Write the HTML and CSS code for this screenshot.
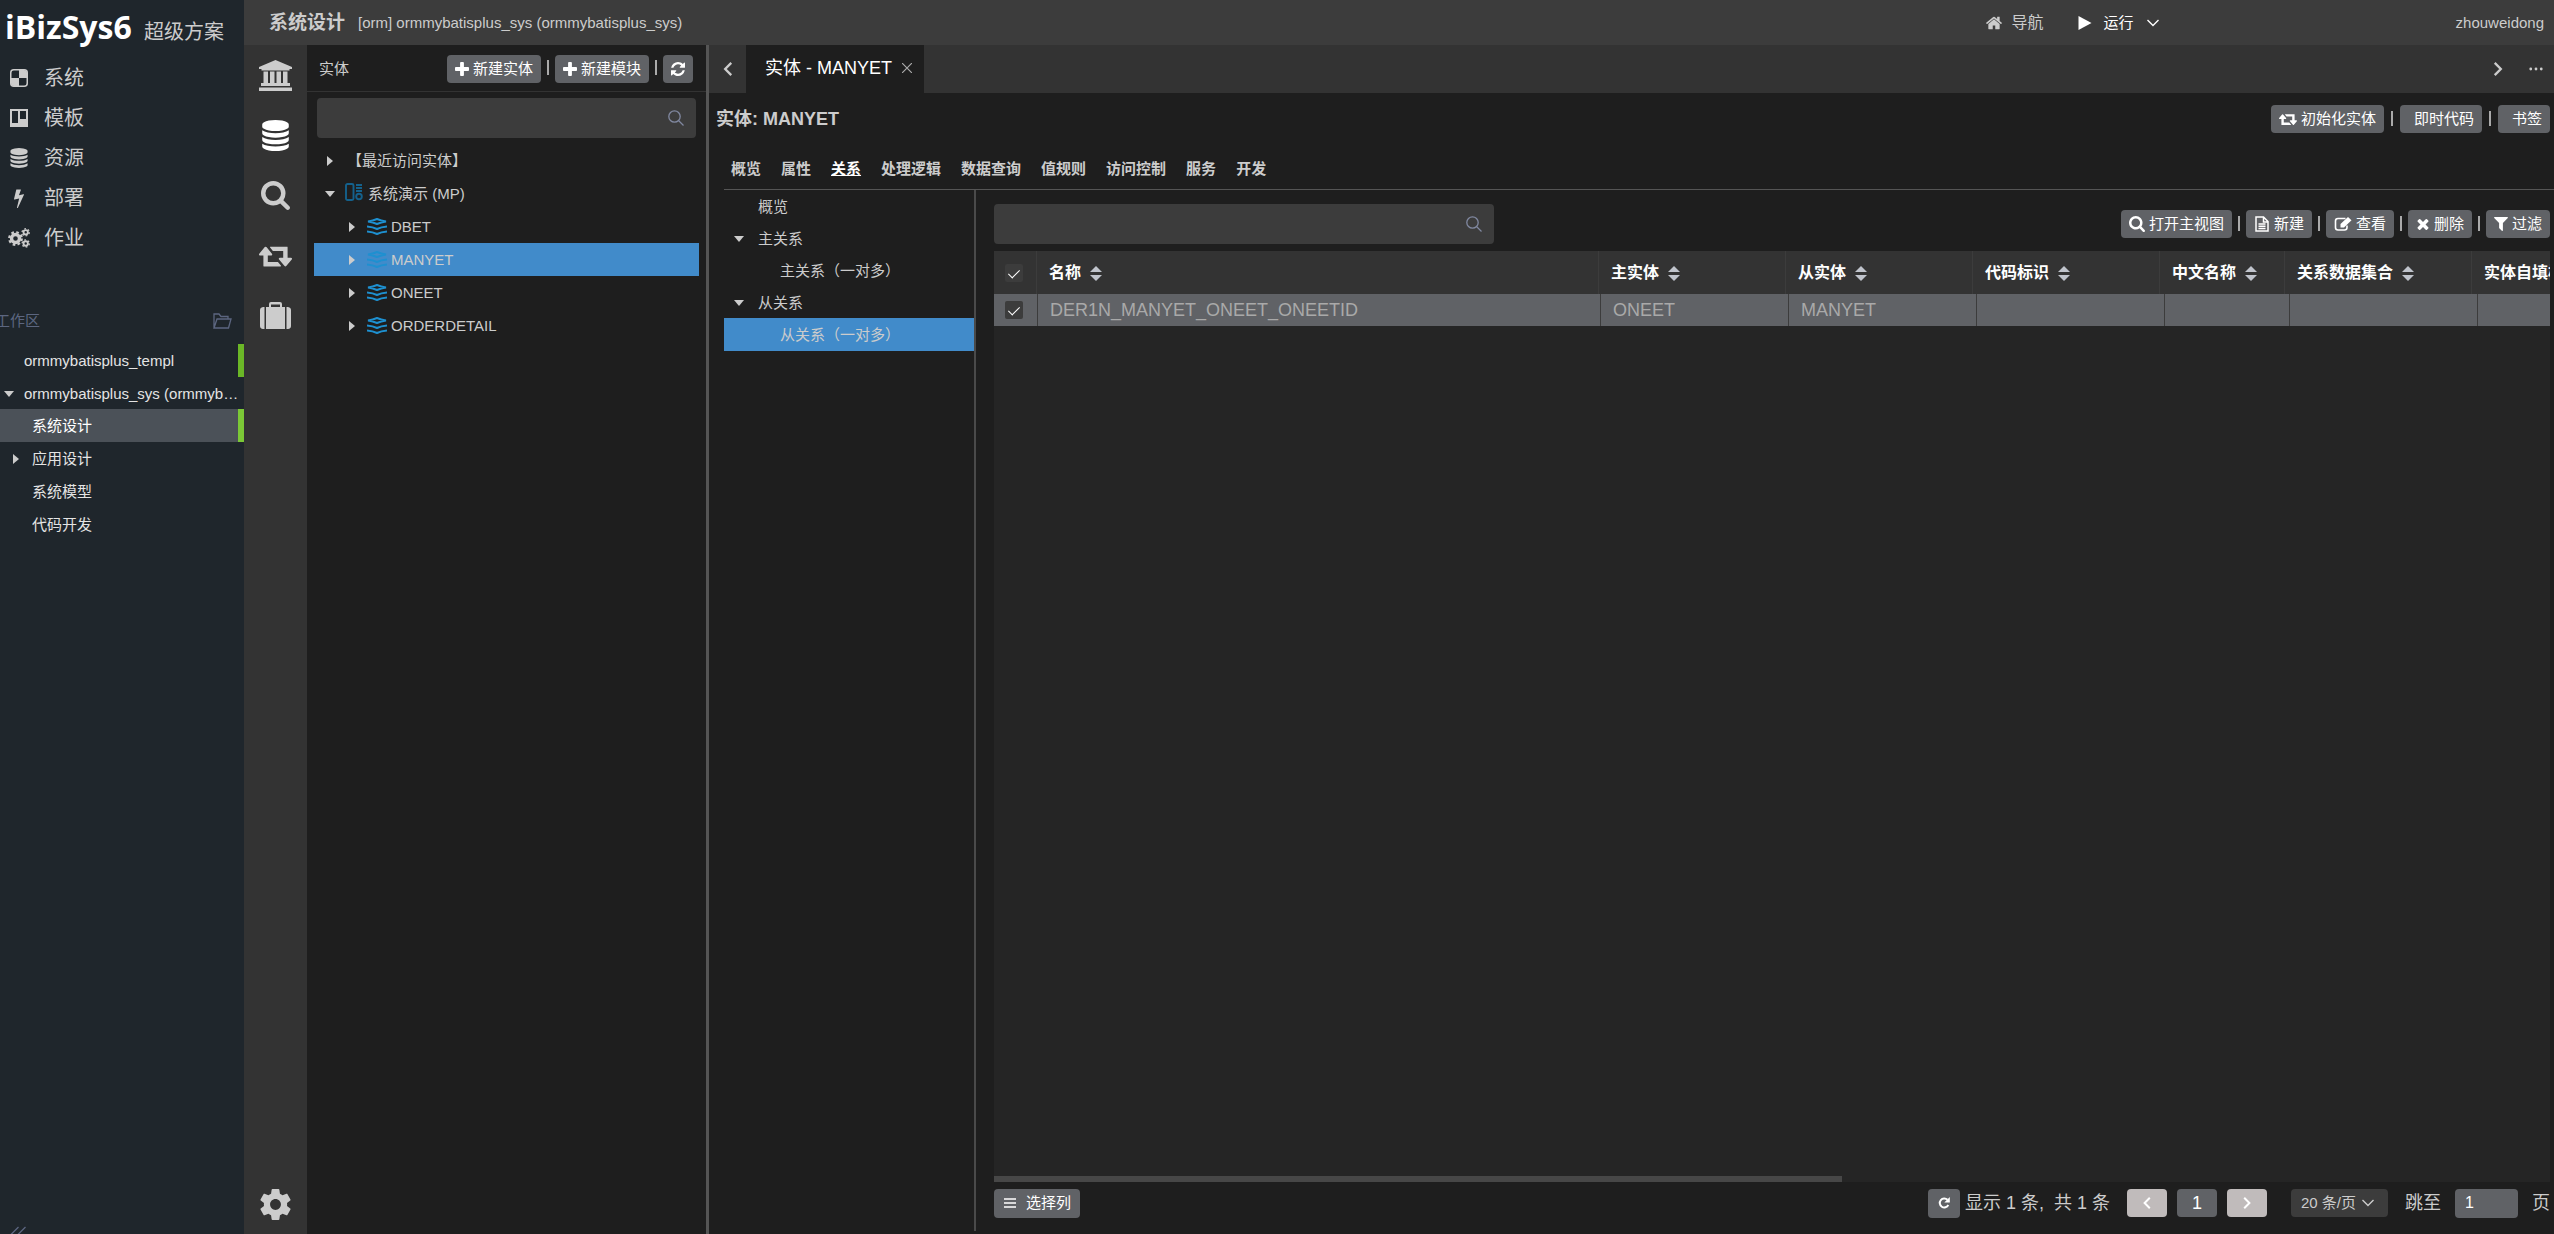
FILE: index.html
```html
<!DOCTYPE html>
<html lang="zh-CN">
<head>
  <meta charset="UTF-8">
  <meta name="viewport" content="width=device-width, initial-scale=1.0">
  <title>iBizSys6 - 系统设计</title>
  <link rel="stylesheet" href="styles.css">
</head>
<body>

<!-- icon sprite -->
<svg class="sprite" aria-hidden="true">
  <symbol id="i-plus" viewBox="192 128 1408 1408"><path d="M1600 736v192q0 40-28 68t-68 28h-416v416q0 40-28 68t-68 28h-192q-40 0-68-28t-28-68v-416h-416q-40 0-68-28t-28-68v-192q0-40 28-68t68-28h416v-416q0-40 28-68t68-28h192q40 0 68 28t28 68v416h416q40 0 68 28t28 68z"/></symbol>
  <symbol id="i-search" viewBox="64 128 1664 1664"><path d="M1216 832q0-185-131.5-316.5t-316.5-131.5-316.5 131.5-131.5 316.5 131.5 316.5 316.5 131.5 316.5-131.5 131.5-316.5zm512 832q0 52-38 90t-90 38q-54 0-90-38l-343-342q-179 124-399 124-143 0-273.5-55.5t-225-150-150-225-55.5-273.5 55.5-273.5 150-225 225-150 273.5-55.5 273.5 55.5 225 150 150 225 55.5 273.5q0 220-124 399l343 343q37 37 37 90z"/></symbol>
  <symbol id="i-database" viewBox="128 0 1536 1792"><path d="M896 768q237 0 443-43t325-127v170q0 69-103 128t-280 93.5-385 34.5-385-34.5-280-93.5-103-128v-170q119 84 325 127t443 43zm0 768q237 0 443-43t325-127v170q0 69-103 128t-280 93.5-385 34.5-385-34.5-280-93.5-103-128v-170q119 84 325 127t443 43zm0-384q237 0 443-43t325-127v170q0 69-103 128t-280 93.5-385 34.5-385-34.5-280-93.5-103-128v-170q119 84 325 127t443 43zm0-1152q208 0 385 34.5t280 93.5 103 128v128q0 69-103 128t-280 93.5-385 34.5-385-34.5-280-93.5-103-128v-128q0-69 103-128t280-93.5 385-34.5z"/></symbol>
  <symbol id="i-retweet" viewBox="0 256 1920 1280"><path d="M1280 1504q0 13-9.500 22.500t-22.500 9.500h-960q-8 0-13.500-2t-9-7-5.500-8-3-11.500-1-11.500v-600h-192q-26 0-45-19t-19-45q0-24 15-41l320-384q19-22 49-22t49 22l320 384q15 17 15 41 0 26-19 45t-45 19h-192v384h576q16 0 25 11l160 192q7 10 7 21zm640-416q0 24-15 41l-320 384q-20 23-49 23t-49-23l-320-384q-15-17-15-41 0-26 19-45t45-19h192v-384h-576q-16 0-25-12l-160-192q-7-9-7-20 0-13 9.500-22.500t22.500-9.500h960q8 0 13.500 2t9 7 5.500 8 3 11.500 1 11.500v600h192q26 0 45 19t19 45z"/></symbol>
  <symbol id="i-refresh" viewBox="128 128 1536 1536"><path d="M1639 1056q0 5-1 7-64 268-268 434.500t-478 166.500q-146 0-282.500-55t-243.500-157l-129 129q-19 19-45 19t-45-19-19-45v-448q0-26 19-45t45-19h448q26 0 45 19t19 45-19 45l-137 137q71 66 161 102t187 36q134 0 250-65t186-179q11-17 53-117 8-23 30-23h192q13 0 22.500 9.500t9.500 22.500zm25-800v448q0 26-19 45t-45 19h-448q-26 0-45-19t-19-45 19-45l138-138q-148-137-349-137-134 0-250 65t-186 179q-11 17-53 117-8 23-30 23h-199q-13 0-22.500-9.500t-9.500-22.500v-7q65-268 270-434.500t480-166.500q146 0 284 55.500t245 156.500l130-129q19-19 45-19t45 19 19 45z"/></symbol>
  <symbol id="i-times" viewBox="302 366 1188 1188"><path d="M1490 1322q0 40-28 68l-136 136q-28 28-68 28t-68-28l-294-294-294 294q-28 28-68 28t-68-28l-136-136q-28-28-28-68t28-68l294-294-294-294q-28-28-28-68t28-68l136-136q28-28 68-28t68 28l294 294 294-294q28-28 68-28t68 28l136 136q28 28 28 68t-28 68l-294 294 294 294q28 28 28 68z"/></symbol>
  <symbol id="i-filter" viewBox="190 256 1412 1408"><path d="M1595 295q17 41-14 70l-493 493v742q0 42-39 59-13 5-25 5-27 0-45-19l-256-256q-19-19-19-45v-486l-493-493q-31-29-14-70 17-39 59-39h1280q42 0 59 39z"/></symbol>
  <symbol id="i-home" viewBox="80 250 1632 1290"><path d="M1472 992v480q0 26-19 45t-45 19h-384v-384h-256v384h-384q-26 0-45-19t-19-45v-480q0-1 .5-3t.5-3l575-474 575 474q1 2 1 6zm223-69l-62 74q-8 9-21 11h-3q-13 0-21-7l-692-577-692 577q-12 8-24 7-13-2-21-11l-62-74q-8-10-7-23.500t11-21.500l719-599q32-26 76-26t76 26l244 204v-195q0-14 9-23t23-9h192q14 0 23 9t9 23v408l219 182q10 8 11 21.500t-7 23.500z"/></symbol>
  <symbol id="i-bolt" viewBox="446 0 900 1792"><path d="M1333 566q18 20 7 44l-540 1157q-13 25-42 25-4 0-14-2-17-5-25.500-19t-4.500-30l197-808-406 101q-4 1-12 1-18 0-31-11-18-15-13-39l201-825q4-14 16-23t28-9h328q19 0 32 12.500t13 29.500q0 8-5 18l-171 463 396-98q8-2 12-2 19 0 34 15z"/></symbol>
  <symbol id="i-bank" viewBox="0 0 33 31"><path d="M16.500 0L33 7v2h-2.500v1.500h-28V9H0V7zM4.500 11.500H9V23h2V11.500h4.500V23h2V11.500H22V23h2V11.500h4.500V23H31v3H2v-3h2.500zM0 27.500h33V31H0z"/></symbol>
  <symbol id="i-suitcase" viewBox="0 0 31 27"><path d="M3 5h1.500v22H3q-3-.5-3-3V8q0-2.500 3-3zM28 5h-1.500v22H28q3-.5 3-3V8q0-2.500-3-3zM6 5h3V2q0-2 2-2h9q2 0 2 2v3h3v22H6zM11 2.500V5h9V2.500z" fill-rule="evenodd"/></symbol>
  <symbol id="i-setting" viewBox="2 2 20 20"><path d="M19.430 12.980c.04-.32.07-.64.07-.98s-.03-.66-.07-.98l2.110-1.650c.19-.15.24-.42.12-.64l-2-3.460c-.12-.22-.39-.3-.61-.22l-2.490 1c-.52-.4-1.080-.73-1.690-.98l-.38-2.650C14.460 2.180 14.250 2 14 2h-4c-.25 0-.46.18-.49.42l-.38 2.650c-.61.25-1.170.59-1.690.98l-2.490-1c-.23-.09-.49 0-.61.22l-2 3.460c-.13.22-.07.49.12.64l2.110 1.650c-.04.32-.07.65-.07.98s.03.66.07.98l-2.110 1.650c-.19.15-.24.42-.12.64l2 3.460c.12.22.39.3.61.22l2.490-1c.52.4 1.080.73 1.690.98l.38 2.650c.03.24.24.42.49.42h4c.25 0 .46-.18.49-.42l.38-2.650c.61-.25 1.170-.59 1.690-.98l2.490 1c.23.09.49 0 .61-.22l2-3.460c.12-.22.07-.49-.12-.64l-2.110-1.650zM12 15.500c-1.930 0-3.500-1.570-3.500-3.500s1.570-3.500 3.500-3.500 3.500 1.570 3.500 3.500-1.570 3.500-3.500 3.500z"/></symbol>
  <symbol id="i-checker" viewBox="-1 -1 20 20"><rect x=".75" y=".75" width="16.500" height="16.500" rx="3" fill="none" stroke="currentColor" stroke-width="1.500"/><path d="M9 1h5q3 0 3 3v5H9zM1 9h8v8H4q-3 0-3-3z"/></symbol>
  <symbol id="i-board" viewBox="-1 -1 20 20"><path fill-rule="evenodd" d="M0 0h18v18H0zM2 2v12h6V2zM10 2v8h6V2z"/></symbol>
  <symbol id="i-cogs" viewBox="0 0 22 20">
    <g fill="none" stroke="currentColor"><circle cx="7.500" cy="10.500" r="4" stroke-width="3.400"/><circle cx="7.500" cy="10.500" r="6.300" stroke-width="2.200" stroke-dasharray="2.600 2.348"/><circle cx="17.700" cy="4.300" r="2.200" stroke-width="1.900"/><circle cx="17.700" cy="4.300" r="3.600" stroke-width="1.300" stroke-dasharray="1.700 2.070"/><circle cx="17.700" cy="15.500" r="2.200" stroke-width="1.900"/><circle cx="17.700" cy="15.500" r="3.600" stroke-width="1.300" stroke-dasharray="1.700 2.070"/></g>
  </symbol>
  <symbol id="i-folder" viewBox="0 0 19 16"><path fill="none" stroke="currentColor" stroke-width="1.300" d="M1 15V1h5l2 2.500h7V6M1 15L4 6h14l-2.500 9z"/></symbol>
  <symbol id="i-collapse" viewBox="0 0 16 16"><path fill="none" stroke="currentColor" stroke-width="1.300" d="M8.500 1L1 8.500 8.500 16M15.500 1L8 8.500l7.500 7.500"/></symbol>
  <symbol id="i-lens" viewBox="0 0 16 16"><g fill="none" stroke="currentColor" stroke-width="1.300"><circle cx="6.500" cy="6.500" r="5.700"/><path d="M10.500 10.500l5 5"/></g></symbol>
  <symbol id="i-module" viewBox="0 0 18 18"><g fill="none" stroke="currentColor" stroke-width="1.900"><rect x="1" y="1" width="7.500" height="16" rx="1.500"/><path d="M11 2h6M11 5h6M11 8h6"/><circle cx="14" cy="13.500" r="2.800"/></g></symbol>
  <symbol id="i-layers" viewBox="0 0 20 17"><path fill="none" stroke="currentColor" stroke-width="2" d="M1 3.500Q6 2.800 10 1q4 1.800 9 2.500-5 .7-9 2.500-4-1.800-9-2.500zM0 8.500q6 .5 10 2.500 4-2 10-2.500M0 13.500q6 .5 10 2.500 4-2 10-2.500"/></symbol>
  <symbol id="i-left" viewBox="0 0 10 15"><path fill="none" stroke="currentColor" stroke-width="2.500" d="M8.500 1L2 7.500 8.500 14"/></symbol>
  <symbol id="i-right" viewBox="0 0 10 15"><path fill="none" stroke="currentColor" stroke-width="2.500" d="M1.500 1L8 7.500 1.500 14"/></symbol>
  <symbol id="i-down" viewBox="0 0 12 8"><path fill="none" stroke="currentColor" stroke-width="1.400" d="M.5 1L6 6.500 11.500 1"/></symbol>
  <symbol id="i-close" viewBox="0 0 10 10"><path fill="none" stroke="currentColor" stroke-width="1.200" d="M0 0l10 10M10 0L0 10"/></symbol>
  <symbol id="i-more" viewBox="0 0 16 4"><circle cx="2" cy="2" r="1.600"/><circle cx="8" cy="2" r="1.600"/><circle cx="14" cy="2" r="1.600"/></symbol>
  <symbol id="i-play" viewBox="0 0 13 14"><path d="M0 0l13 7-13 7z"/></symbol>
  <symbol id="i-file" viewBox="0 0 14 16"><path fill="none" stroke="currentColor" stroke-width="1.500" d="M1 1h7.500L13 5.500V15H1zM8.500 1v5H13M3.500 8h7M3.500 10.300h7M3.500 12.600h7"/></symbol>
  <symbol id="i-edit" viewBox="0 0 17 14"><path fill="none" stroke="currentColor" stroke-width="1.600" d="M11 1.500H3.500Q1 1.500 1 4v6.500Q1 13 3.500 13H10q2.500 0 2.500-2.500V8.500"/><path d="M13.500 0L17 3.200 9.500 10.500H6V7z"/></symbol>
  <symbol id="i-redo" viewBox="0 0 12 12"><path fill="none" stroke="currentColor" stroke-width="2" d="M9.500 2.800A4.500 4.500 0 1 0 10.300 8"/><path d="M11.800 0v5.500H6.300z"/></symbol>
  <symbol id="i-menu" viewBox="0 0 12 10"><path fill="none" stroke="currentColor" stroke-width="1.400" d="M0 1h12M0 5h12M0 9h12"/></symbol>
</svg>

<aside class="sidebar">
  <div class="logo"><span class="logo-name">iBizSys6</span><span class="logo-sub">超级方案</span></div>
  <nav class="main-menu">
    <a href="#"><svg class="icon"><use href="#i-checker"/></svg>系统</a>
    <a href="#"><svg class="icon"><use href="#i-board"/></svg>模板</a>
    <a href="#"><svg class="icon"><use href="#i-database"/></svg>资源</a>
    <a href="#"><svg class="icon"><use href="#i-bolt"/></svg>部署</a>
    <a href="#"><svg class="icon"><use href="#i-cogs"/></svg>作业</a>
  </nav>
  <div class="workspace-title">
    <span>工作区</span>
    <button class="icon-btn" aria-label="打开"><svg class="icon"><use href="#i-folder"/></svg></button>
  </div>
  <ul class="workspace">
    <li class="marked"><span class="arrow"></span><span class="label">ormmybatisplus_templ</span></li>
    <li><span class="arrow open"></span><span class="label">ormmybatisplus_sys (ormmybatisplus_sys)</span></li>
    <li class="sub marked active"><span class="arrow"></span><span class="label">系统设计</span></li>
    <li class="sub"><span class="arrow closed"></span><span class="label">应用设计</span></li>
    <li class="sub"><span class="arrow"></span><span class="label">系统模型</span></li>
    <li class="sub"><span class="arrow"></span><span class="label">代码开发</span></li>
  </ul>
  <button class="icon-btn collapse" aria-label="收起"><svg class="icon"><use href="#i-collapse"/></svg></button>
</aside>

<div class="page">
  <header class="header">
    <h1>系统设计</h1>
    <span class="system-name">[orm] ormmybatisplus_sys (ormmybatisplus_sys)</span>
    <div class="header-menu">
      <a href="#" class="guide"><svg class="icon"><use href="#i-home"/></svg>导航</a>
      <button class="run"><svg class="icon"><use href="#i-play"/></svg>运行<svg class="icon down"><use href="#i-down"/></svg></button>
    </div>
    <span class="user">zhouweidong</span>
  </header>

  <div class="body">
    <nav class="icon-bar">
      <button aria-label="系统"><svg class="icon"><use href="#i-bank"/></svg></button>
      <button class="active" aria-label="实体"><svg class="icon"><use href="#i-database"/></svg></button>
      <button aria-label="搜索"><svg class="icon lens"><use href="#i-search"/></svg></button>
      <button aria-label="同步"><svg class="icon"><use href="#i-retweet"/></svg></button>
      <button aria-label="工具"><svg class="icon case"><use href="#i-suitcase"/></svg></button>
      <button class="setting" aria-label="设置"><svg class="icon case"><use href="#i-setting"/></svg></button>
    </nav>

    <section class="entity-panel">
      <div class="panel-head">
        <span>实体</span>
        <div class="toolbar">
          <button class="btn"><svg class="icon"><use href="#i-plus"/></svg>新建实体</button>
          <span class="sep"></span>
          <button class="btn"><svg class="icon"><use href="#i-plus"/></svg>新建模块</button>
          <span class="sep"></span>
          <button class="btn" aria-label="刷新"><svg class="icon"><use href="#i-refresh"/></svg></button>
        </div>
      </div>
      <div class="search">
        <input type="text" aria-label="搜索实体">
        <svg class="icon"><use href="#i-lens"/></svg>
      </div>
      <ul class="tree">
        <li><span class="arrow closed"></span><span class="recent">【最近访问实体】</span></li>
        <li><span class="arrow open"></span><svg class="icon module"><use href="#i-module"/></svg>系统演示 (MP)</li>
        <li class="sub"><span class="arrow closed"></span><svg class="icon layers"><use href="#i-layers"/></svg>DBET</li>
        <li class="sub active"><span class="arrow closed"></span><svg class="icon layers"><use href="#i-layers"/></svg>MANYET</li>
        <li class="sub"><span class="arrow closed"></span><svg class="icon layers"><use href="#i-layers"/></svg>ONEET</li>
        <li class="sub"><span class="arrow closed"></span><svg class="icon layers"><use href="#i-layers"/></svg>ORDERDETAIL</li>
      </ul>
    </section>

    <main class="main">
      <div class="tabs">
        <button class="icon-btn prev" aria-label="上一个"><svg class="icon"><use href="#i-left"/></svg></button>
        <div class="tab">实体 - MANYET<button class="icon-btn" aria-label="关闭"><svg class="icon"><use href="#i-close"/></svg></button></div>
        <button class="icon-btn next" aria-label="下一个"><svg class="icon"><use href="#i-right"/></svg></button>
        <button class="icon-btn more" aria-label="更多"><svg class="icon"><use href="#i-more"/></svg></button>
      </div>

      <div class="title-row">
        <h2>实体: MANYET</h2>
        <div class="toolbar">
          <button class="btn"><svg class="icon wide"><use href="#i-retweet"/></svg>初始化实体</button>
          <span class="sep"></span>
          <button class="btn no-icon">即时代码</button>
          <span class="sep"></span>
          <button class="btn no-icon">书签</button>
        </div>
      </div>

      <nav class="sub-nav">
        <a href="#">概览</a>
        <a href="#">属性</a>
        <a href="#" class="active">关系</a>
        <a href="#">处理逻辑</a>
        <a href="#">数据查询</a>
        <a href="#">值规则</a>
        <a href="#">访问控制</a>
        <a href="#">服务</a>
        <a href="#">开发</a>
      </nav>

      <div class="content">
        <ul class="relation-tree">
          <li><span class="arrow"></span>概览</li>
          <li><span class="arrow open"></span>主关系</li>
          <li class="sub"><span class="arrow"></span>主关系（一对多）</li>
          <li><span class="arrow open"></span>从关系</li>
          <li class="sub active"><span class="arrow"></span>从关系（一对多）</li>
        </ul>

        <section class="grid">
          <div class="grid-bar">
            <div class="search">
              <input type="text" aria-label="搜索关系">
              <svg class="icon"><use href="#i-lens"/></svg>
            </div>
            <div class="toolbar">
              <button class="btn"><svg class="icon medium"><use href="#i-search"/></svg>打开主视图</button>
              <span class="sep"></span>
              <button class="btn"><svg class="icon medium"><use href="#i-file"/></svg>新建</button>
              <span class="sep"></span>
              <button class="btn"><svg class="icon wide"><use href="#i-edit"/></svg>查看</button>
              <span class="sep"></span>
              <button class="btn"><svg class="icon small"><use href="#i-times"/></svg>删除</button>
              <span class="sep"></span>
              <button class="btn"><svg class="icon"><use href="#i-filter"/></svg>过滤</button>
            </div>
          </div>

          <div class="table-wrap">
            <table class="table-head">
              <colgroup><col class="c-check"><col class="c-name"><col class="c-mid"><col class="c-mid"><col class="c-mid"><col class="c-short"><col class="c-mid"><col class="c-mid"></colgroup>
              <thead>
                <tr>
                  <th><input type="checkbox" checked aria-label="全选"></th>
                  <th>名称<span class="sort"></span></th>
                  <th>主实体<span class="sort"></span></th>
                  <th>从实体<span class="sort"></span></th>
                  <th>代码标识<span class="sort"></span></th>
                  <th>中文名称<span class="sort"></span></th>
                  <th>关系数据集合<span class="sort"></span></th>
                  <th>实体自填模式<span class="sort"></span></th>
                </tr>
              </thead>
            </table>
            <table class="table-body">
              <colgroup><col class="c-check"><col class="c-name"><col class="c-mid"><col class="c-mid"><col class="c-mid"><col class="c-short"><col class="c-mid"><col class="c-mid"></colgroup>
              <tbody>
                <tr>
                  <td><input type="checkbox" checked aria-label="选择行"></td>
                  <td>DER1N_MANYET_ONEET_ONEETID</td>
                  <td>ONEET</td>
                  <td>MANYET</td>
                  <td></td>
                  <td></td>
                  <td></td>
                  <td></td>
                </tr>
              </tbody>
            </table>
            <div class="scrollbar"></div>
          </div>

          <div class="grid-foot">
            <button class="btn columns"><svg class="icon"><use href="#i-menu"/></svg>选择列</button>
            <div class="pager">
              <button class="btn reload" aria-label="刷新"><svg class="icon"><use href="#i-redo"/></svg></button>
              <span class="total">显示 1 条,&nbsp; 共 1 条</span>
              <div class="pages">
                <button class="page-btn disabled" aria-label="上一页"><svg class="icon"><use href="#i-left"/></svg></button>
                <button class="page-btn">1</button>
                <button class="page-btn disabled" aria-label="下一页"><svg class="icon"><use href="#i-right"/></svg></button>
              </div>
              <div class="page-size">
                <select aria-label="每页条数"><option>20 条/页</option></select>
                <svg class="icon"><use href="#i-down"/></svg>
              </div>
              <label for="jump">跳至</label>
              <input type="text" id="jump" value="1">
              <span>页</span>
            </div>
          </div>
        </section>
      </div>
    </main>
  </div>
</div>

</body>
</html>
```

FILE: styles.css
```css
* {
  box-sizing: border-box;
  margin: 0;
  padding: 0;
}

body {
  display: flex;
  height: 100vh;
  overflow: hidden;
  background: #1e1e1e;
  color: #ccc;
  font-family: "Liberation Sans", "Noto Sans CJK SC", sans-serif;
  font-size: 15px;
  line-height: 20px;
}

button,
input,
select {
  font: inherit;
  color: inherit;
  border: none;
  outline: none;
}

button {
  background: none;
  cursor: pointer;
}

a {
  color: inherit;
  text-decoration: none;
}

ul {
  list-style: none;
}

.sprite {
  position: absolute;
  width: 0;
  height: 0;
}

.icon {
  display: block;
  flex: none;
  width: 14px;
  height: 14px;
  fill: currentColor;
}

.icon-btn {
  display: flex;
  align-items: center;
  justify-content: center;
}

/* tree arrows */
.arrow {
  flex: none;
  width: 10px;
  display: flex;
  justify-content: center;
}

.arrow.open::before {
  content: "";
  border: 5px solid transparent;
  border-top: 6px solid #ccc;
  border-bottom: none;
}

.arrow.closed::before {
  content: "";
  border: 5px solid transparent;
  border-left: 6px solid #ccc;
  border-right: none;
}

/* left sidebar */
.sidebar {
  flex: none;
  display: flex;
  flex-direction: column;
  width: 244px;
  overflow: hidden;
  background: #1f262c;
}

.logo {
  display: flex;
  align-items: baseline;
  justify-content: space-between;
  height: 58px;
  padding: 4px 20px 0 5px;
  line-height: 46px;
  white-space: nowrap;
}

.logo-name {
  font-family: "Open Sans", sans-serif;
  font-size: 32px;
  font-weight: bold;
  color: #fff;
}

.logo-sub {
  font-size: 20px;
}

.main-menu a {
  display: flex;
  align-items: center;
  gap: 14px;
  height: 40px;
  padding-left: 8px;
  font-size: 20px;
}

.main-menu .icon {
  width: 22px;
  height: 20px;
}

.workspace-title {
  display: flex;
  align-items: center;
  justify-content: space-between;
  height: 86px;
  padding: 40px 12px 0 0;
  color: #5c6680;
}

.workspace-title span {
  margin-left: -5px;
}

.workspace-title .icon {
  width: 19px;
  height: 16px;
}

.workspace li {
  display: flex;
  align-items: center;
  gap: 10px;
  height: 33px;
  padding-left: 4px;
  color: #e4e4e4;
}

.workspace .sub {
  gap: 5px;
  padding-left: 17px;
}

.workspace .sub .arrow {
  justify-content: flex-start;
  margin-left: -4px;
  width: 14px;
}

.workspace .label {
  overflow: hidden;
  text-overflow: ellipsis;
  white-space: nowrap;
}

.workspace .marked {
  border-right: 6px solid #6bb727;
}

.workspace .active {
  margin-top: -1px;
  background: #4b5158;
  border-right-color: #7bc836;
  color: #fff;
}

.collapse {
  margin: auto 0 -8px 10px;
  width: 16px;
  color: #5c6680;
}

.collapse .icon {
  width: 16px;
  height: 16px;
}

/* header */
.page {
  flex: 1;
  display: flex;
  flex-direction: column;
  min-width: 0;
}

.header {
  flex: none;
  display: flex;
  align-items: center;
  height: 45px;
  padding: 0 10px 0 25px;
  background: #3c3c3c;
}

.header h1 {
  margin-right: 13px;
  font-size: 19px;
}

.header-menu {
  display: flex;
  align-items: center;
  gap: 34px;
  margin-left: auto;
  margin-right: 296px;
}

.guide,
.run {
  display: flex;
  align-items: center;
  gap: 10px;
}

.guide {
  font-size: 16px;
}

.guide .icon {
  width: 16px;
}

.run {
  gap: 12px;
  color: #fff;
}

.run .down {
  height: 8px;
}

.body {
  flex: 1;
  display: flex;
  min-height: 0;
}

.icon-bar {
  flex: none;
  display: flex;
  flex-direction: column;
  width: 63px;
  background: #333;
}

.icon-bar button {
  display: flex;
  align-items: center;
  justify-content: center;
  height: 60px;
}

.icon-bar .icon {
  width: 33px;
  height: 31px;
}

.icon-bar .lens {
  width: 29px;
  height: 29px;
}

.icon-bar .case {
  width: 31px;
}

.icon-bar .active {
  color: #fff;
}

.icon-bar .setting {
  margin-top: auto;
}

/* buttons */
.toolbar {
  display: flex;
  align-items: center;
  gap: 6px;
}

.btn {
  display: flex;
  align-items: center;
  gap: 4px;
  height: 28px;
  padding: 0 8px;
  border-radius: 4px;
  background: #606266;
  color: #fff;
  white-space: nowrap;
}

.btn .medium {
  width: 16px;
  height: 16px;
}

.btn .wide {
  width: 18px;
}

.btn .small {
  height: 11px;
}

.btn.no-icon {
  padding-left: 14px;
}

.sep {
  width: 2px;
  height: 15px;
  margin-bottom: 2px;
  background: #aaa;
}

.search {
  position: relative;
}

.search input {
  display: block;
  width: 100%;
  height: 40px;
  padding: 0 40px 0 12px;
  border-radius: 4px;
  background: #3c3c3c;
}

.search .icon {
  position: absolute;
  top: 12px;
  right: 12px;
  width: 16px;
  height: 16px;
  color: #8088a0;
}

/* entity tree */
.entity-panel {
  flex: none;
  width: 402px;
  border-right: 3px solid #555;
}

.panel-head {
  display: flex;
  align-items: center;
  justify-content: space-between;
  height: 47px;
  padding: 1px 13px 0 12px;
  border-bottom: 1px solid #333;
}

.entity-panel .search {
  margin: 6px 10px;
}

.tree {
  padding: 0 7px;
}

.tree li {
  display: flex;
  align-items: center;
  height: 33px;
  padding-left: 11px;
}

.tree .sub {
  padding-left: 33px;
}

.tree .active,
.relation-tree .active {
  background: #418bca;
}

.recent {
  margin-left: 12px;
}

.tree .module {
  width: 18px;
  height: 18px;
  margin: 0 5px 4px 10px;
  color: #14618c;
}

.tree .layers {
  width: 20px;
  height: 17px;
  margin: 0 4px 0 10px;
  color: #1e90d0;
}

/* main area */
.main {
  flex: 1;
  display: flex;
  flex-direction: column;
  min-width: 0;
}

.tabs {
  flex: none;
  display: flex;
  align-items: center;
  height: 48px;
  background: #333;
}

.prev {
  width: 37px;
}

.tab {
  display: flex;
  align-items: center;
  gap: 10px;
  height: 100%;
  padding: 0 12px 2px 19px;
  background: #1e1e1e;
  color: #fff;
  font-size: 18px;
}

.tab .icon {
  width: 10px;
  height: 10px;
  color: #aaa;
}

.next {
  margin-left: auto;
  width: 40px;
}

.more {
  width: 36px;
}

.title-row {
  display: flex;
  align-items: center;
  justify-content: space-between;
  height: 50px;
  padding: 2px 4px 0 7px;
}

.title-row .toolbar {
  gap: 7px;
}

.title-row h2 {
  font-size: 18px;
}

.sub-nav {
  display: flex;
  gap: 20px;
  height: 47px;
  margin-left: 15px;
  padding: 16px 0 0 7px;
  border-bottom: 1px solid #555;
  font-weight: bold;
}

.sub-nav .active {
  color: #fff;
  text-decoration: underline;
}

.content {
  flex: 1;
  display: flex;
  min-height: 0;
  margin-left: 15px;
  padding-bottom: 3px;
}

.relation-tree {
  flex: none;
  width: 252px;
  border-right: 2px solid #4a4a4a;
}

.relation-tree li {
  display: flex;
  align-items: center;
  gap: 14px;
  height: 33px;
  margin-bottom: -1px;
  padding-left: 10px;
}

.relation-tree .sub {
  padding-left: 32px;
}

.grid {
  flex: 1;
  display: flex;
  flex-direction: column;
  min-width: 0;
  padding: 14px 4px 0 18px;
}

.grid-bar {
  display: flex;
  align-items: center;
  justify-content: space-between;
}

.grid-bar .search {
  width: 500px;
}

.table-wrap {
  flex: 1;
  display: flex;
  flex-direction: column;
  margin-top: 7px;
  overflow: hidden;
  background: #252525;
}

table {
  flex: none;
  width: 1665px;
  table-layout: fixed;
  border-collapse: separate;
  border-spacing: 0;
}

th,
td {
  padding: 0 12px;
  border-right: 1px solid #3c3c3c;
  text-align: left;
  white-space: nowrap;
}

th:first-child,
td:first-child {
  padding: 0 11px;
}

th {
  height: 43px;
  background: #333;
  color: #fff;
  font-size: 16px;
}

td {
  height: 32px;
  background: #606266;
  color: #a9a9a9;
  font-size: 18px;
}

.c-check {
  width: 43px;
}

.c-name {
  width: 562px;
}

.c-mid {
  width: 187px;
}

.c-short {
  width: 125px;
}

.table-body {
  width: 1672px;
}

.table-body .c-check {
  width: 44px;
}

.table-body .c-name {
  width: 563px;
}

.table-body .c-mid {
  width: 188px;
}

input[type="checkbox"] {
  appearance: none;
  display: flex;
  justify-content: center;
  width: 18px;
  height: 18px;
  border-radius: 2px;
  background: #3c3c3c;
}

input[type="checkbox"]:checked::after {
  content: "";
  width: 5px;
  height: 10px;
  margin-top: 3px;
  border: solid #fff;
  border-width: 0 1px 1px 0;
  transform: rotate(45deg);
}

.sort {
  display: inline-flex;
  flex-direction: column;
  gap: 3px;
  margin-left: 9px;
  vertical-align: middle;
}

.sort::before,
.sort::after {
  content: "";
  border: 6px solid transparent;
}

.sort::before {
  border-top: none;
  border-bottom-color: #c0c4cc;
}

.sort::after {
  border-bottom: none;
  border-top-color: #c0c4cc;
}

.scrollbar {
  width: 54.5%;
  height: 6px;
  margin-top: auto;
  background: #474747;
}

.grid-foot {
  flex: none;
  display: flex;
  align-items: center;
  justify-content: space-between;
  height: 42px;
  margin-bottom: 7px;
}

.columns {
  gap: 10px;
  height: 29px;
  padding: 0 9px 0 10px;
}

.columns .icon {
  width: 12px;
  height: 10px;
}

.pager {
  display: flex;
  align-items: center;
  font-size: 18px;
}

.reload {
  justify-content: center;
  width: 32px;
  height: 29px;
  margin-right: 5px;
}

.reload .icon {
  width: 12px;
  height: 12px;
}

.pages {
  display: flex;
  gap: 10px;
  margin: 0 24px 0 17px;
}

.page-btn {
  display: flex;
  align-items: center;
  justify-content: center;
  width: 40px;
  height: 28px;
  border-radius: 4px;
  background: #606266;
  color: #fff;
}

.page-btn.disabled {
  background: #c0bbbb;
}

.page-btn .icon {
  height: 12px;
}

.page-size {
  position: relative;
  margin-right: 17px;
  font-size: 15px;
}

.page-size select {
  display: block;
  appearance: none;
  width: 97px;
  height: 28px;
  padding: 0 10px;
  border-radius: 4px;
  background: #3c3c3c;
}

.page-size .icon {
  position: absolute;
  top: 10px;
  right: 14px;
  width: 12px;
  height: 8px;
  pointer-events: none;
}

#jump {
  width: 63px;
  height: 29px;
  margin: 0 14px;
  padding: 0 10px;
  border-radius: 4px;
  background: #606266;
  color: #fff;
  font-size: 16px;
}
```
